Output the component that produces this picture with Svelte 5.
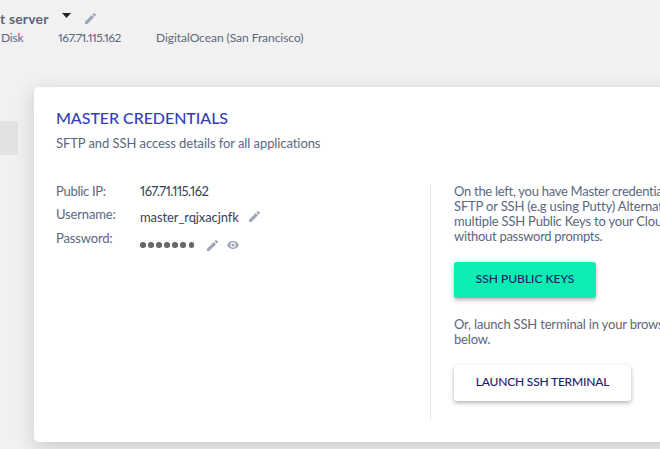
<script>
  const server = {
    ip: '167.71.115.162',
    provider: 'DigitalOcean (San Francisco)',
    username: 'master_rqjxacjnfk'
  };

  const dots = Array(7);

  const intro = [
    { text: 'On the left, you have Master credentia', spacing: -0.28 },
    { text: 'SFTP or SSH (e.g using Putty) Alternat', spacing: -0.17 },
    { text: 'multiple SSH Public Keys to your Clou', spacing: -0.2 },
    { text: 'without password prompts.', spacing: -0.3 }
  ];
</script>

{#snippet pencil()}
  <svg class="pencil" viewBox="3 3 18 18" aria-hidden="true">
    <path d="M3 17.25V21h3.75L17.81 9.94l-3.75-3.75L3 17.25zM20.71 7.04a1 1 0 0 0 0-1.41l-2.34-2.34a1 1 0 0 0-1.41 0l-1.83 1.83 3.75 3.75 1.83-1.83z" />
  </svg>
{/snippet}

<div class="page">
  <header>
    <div class="title">
      <span class="name">t server</span>
      <svg class="caret" viewBox="0 0 9 5"><path d="M0 0h9L4.500 5z" /></svg>
      {@render pencil()}
    </div>
    <div class="meta">
      <span class="disk">Disk</span>
      <span class="ip">{server.ip}</span>
      <span class="provider">{server.provider}</span>
    </div>
  </header>

  <main>
    <div class="side-tab"></div>
    <section class="card">
      <h1>MASTER CREDENTIALS</h1>
      <p class="subtitle">SFTP and SSH access details for all applications</p>

      <div class="columns">
        <div class="details">
          <div class="row">
            <span class="label public">Public IP:</span>
            <span class="value ip-value">{server.ip}</span>
          </div>
          <div class="row">
            <span class="label">Username:</span>
            <span class="value username">{server.username}</span>
            {@render pencil()}
          </div>
          <div class="row password">
            <span class="label">Password:</span>
            <span class="dots">
              {#each dots as _}
                <i></i>
              {/each}
            </span>
            {@render pencil()}
            <svg class="eye" viewBox="1 4.500 22 15" aria-hidden="true">
              <path d="M12 4.500C7 4.500 2.730 7.610 1 12c1.730 4.390 6 7.500 11 7.500s9.270-3.110 11-7.500c-1.730-4.390-6-7.500-11-7.500zM12 17a5 5 0 1 1 0-10 5 5 0 0 1 0 10zm0-8a3 3 0 1 0 0 6 3 3 0 0 0 0-6z" />
            </svg>
          </div>
        </div>

        <div class="access">
          <p>
            {#each intro as line}
              <span style="letter-spacing: {line.spacing}px">{line.text}</span>
            {/each}
          </p>
          <button class="keys">SSH PUBLIC KEYS</button>
          <p class="launch-text">
            <span>Or, launch SSH terminal in your brows</span>
            <span>below.</span>
          </p>
          <button class="terminal">LAUNCH SSH TERMINAL</button>
        </div>
      </div>
    </section>
  </main>
</div>

<style>
  :global(body) {
    margin: 0;
    background: #f1f1f1;
  }

  .page {
    width: 660px;
    height: 449px;
    overflow: hidden;
    background: #f1f1f1;
    color: #5c677d;
    font-family: Lato, 'Liberation Sans', sans-serif;
    font-size: 13px;
    font-variant-numeric: proportional-nums;
    line-height: 15px;
    white-space: nowrap;
  }

  header {
    box-sizing: border-box;
    height: 87px;
    padding-top: 10px;
  }

  .title {
    display: flex;
    height: 20px;
  }

  .name {
    width: 62px;
    font-size: 14px;
    font-weight: 700;
    letter-spacing: 0.15px;
    line-height: 18px;
  }

  svg {
    display: block;
    flex: none;
    fill: #9ca5b8;
  }

  .pencil {
    width: 11px;
    height: 11px;
  }

  .caret {
    width: 9px;
    height: 5px;
    margin: 3px 14px 0 0;
    fill: #222;
  }

  .title .pencil {
    margin-top: 3px;
  }

  .meta {
    display: flex;
    padding-left: 1px;
    font-size: 12px;
  }

  .disk {
    width: 57px;
    letter-spacing: -0.2px;
  }

  .ip {
    width: 98px;
    letter-spacing: -0.48px;
  }

  .provider {
    letter-spacing: -0.05px;
  }

  .ip-value {
    letter-spacing: -0.5px;
  }

  main {
    display: flex;
    align-items: flex-start;
  }

  .side-tab {
    flex: none;
    width: 18px;
    height: 34px;
    margin: 34px 16px 0 0;
    background: #e2e2e2;
    border-radius: 0 3px 3px 0;
  }

  .card {
    box-sizing: border-box;
    flex: none;
    width: 700px;
    height: 355px;
    padding: 21px 22px;
    background: #fff;
    border-radius: 5px;
    box-shadow: 0 5px 20px rgba(0, 0, 0, 0.17);
  }

  h1 {
    margin: 0;
    color: #343eb8;
    font-size: 16px;
    font-weight: 500;
    letter-spacing: -0.05px;
    line-height: 20px;
  }

  p {
    margin: 0;
  }

  .subtitle {
    margin-top: 8px;
    letter-spacing: -0.08px;
  }

  .columns {
    display: flex;
    margin-top: 33px;
  }

  .details {
    box-sizing: border-box;
    width: 375px;
    height: 236px;
    border-right: 1px solid #e5e5e5;
  }

  .row {
    display: flex;
    height: 23px;
  }

  .row:nth-child(2) {
    height: 24px;
  }

  .label {
    width: 84px;
    letter-spacing: -0.15px;
  }

  .public {
    letter-spacing: -0.3px;
  }

  .value {
    color: #35435a;
  }

  .username {
    width: 109px;
    padding-top: 3px;
    letter-spacing: -0.1px;
  }

  .row .pencil {
    margin-top: 4px;
  }

  .dots {
    display: flex;
    gap: 2.6px;
    width: 67px;
    padding-top: 11px;
  }

  .dots i {
    width: 5.5px;
    height: 5.5px;
    background: #666;
    border-radius: 50%;
  }

  .password .pencil {
    margin-top: 9px;
  }

  .eye {
    width: 12px;
    height: 8px;
    margin: 10px 0 0 9px;
  }

  .access {
    padding-left: 23px;
  }

  .access span {
    display: block;
  }

  .launch-text {
    letter-spacing: -0.18px;
  }

  button {
    display: block;
    height: 36px;
    padding: 0 0 3px;
    border: 0;
    border-radius: 3px;
    color: #1c2070;
    font: 500 12px/15px Lato, 'Liberation Sans', sans-serif;
    box-shadow: 0 2px 4px rgba(0, 0, 0, 0.3);
  }

  .keys {
    width: 142px;
    margin: 18px 0 19px;
    background: #0cedb2;
  }

  .terminal {
    width: 177px;
    margin-top: 18px;
    background: #fff;
    letter-spacing: -0.2px;
  }
</style>
